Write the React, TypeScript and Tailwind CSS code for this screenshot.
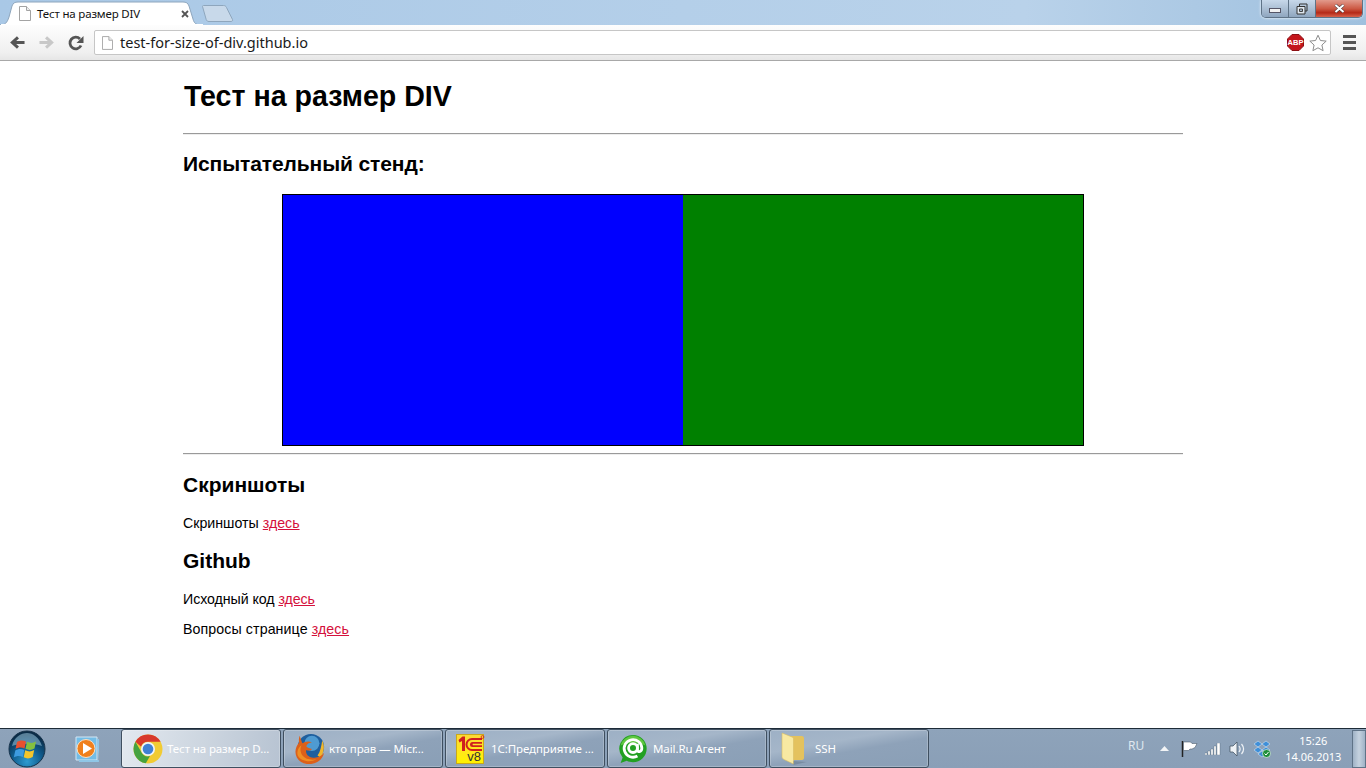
const arial = "font-['Liberation_Sans',Arial,sans-serif]";
const tahoma = "font-['Noto_Sans','DejaVu_Sans',sans-serif]";

function PageIcon({ className }: { className: string }) {
  return (
    <svg viewBox="0 0 12 15" className={className}>
      <path d="M.5.5h7l4 4v10H.5z" fill="#fff" stroke="#a3a3a3" />
      <path d="M7.5.5v4h4" fill="#eee" stroke="#a3a3a3" />
    </svg>
  );
}

function TabStrip() {
  return (
    <div className="h-[25px] flex shrink-0 bg-[linear-gradient(90deg,#a9c8e6,#b4cfe9_50%,#b9d2ea_75%,#9fc0de)]">
      <div className="relative w-[204px] h-[25px] shrink-0 flex items-center pl-[19px] pr-[15px] pt-[2px]">
        <svg viewBox="0 0 204 25" className="absolute inset-0 w-[204px] h-[25px]">
          <path d="M0 25c5 0 7-2 9-8l3-11c1-3 3-4 6-4h165c3 0 5 1 6 4l4 13c1 4 3 6 8 6z" fill="#fff" stroke="#8ea6bd" />
          <path d="M1 25h202" stroke="#fff" strokeWidth="2" />
        </svg>
        <PageIcon className="relative w-[12px] h-[15px] shrink-0" />
        <span className={`relative ml-[6px] text-[11.5px] tracking-[-0.17px] text-[#111] whitespace-nowrap ${tahoma}`}>Тест на размер DIV</span>
        <svg viewBox="0 0 8 8" className="relative ml-auto w-[8px] h-[8px]">
          <path d="M1 1l6 6M7 1L1 7" stroke="#555" strokeWidth="1.8" />
        </svg>
      </div>
      <svg viewBox="0 0 32 17" className="w-[32px] h-[17px] mt-[5px] -ml-[2px] shrink-0">
        <path d="M.5 1.5c0-.6.4-1 1-1h20c1.500 0 2.400.6 3 2l6 12c.4 1-.2 2-1.500 2H7c-1.500 0-2.300-.6-2.800-2z" fill="#c8d9ea" stroke="#8ea6bd" />
      </svg>
      <div className="ml-auto flex h-[18px] border border-t-0 border-[#5f7387] rounded-b-[5px] overflow-hidden mr-[3px] shadow-[0_0_3px_#fff]">
        <div className="w-[27px] flex items-center justify-center pt-[3px] bg-[linear-gradient(#c7d8ea,#a9bdd2_55%,#8fa6bf)] border-r border-[#5f7387]">
          <div className="w-[12px] h-[5px] mt-[1px] bg-[#f2f2f2] border border-[#556]" />
        </div>
        <div className="w-[27px] flex items-center justify-center bg-[linear-gradient(#c7d8ea,#a9bdd2_55%,#8fa6bf)] border-r border-[#5f7387]">
          <svg viewBox="0 0 12 12" className="w-[12px] h-[12px]">
            <path d="M3.500 3V1h7.500v7H9" fill="none" stroke="#333" />
            <path d="M1 3.500h8v7.500H1z" fill="#dfe7ef" stroke="#333" />
            <path d="M3.500 6h3v2.500h-3z" fill="#9fb2c6" stroke="#444" />
          </svg>
        </div>
        <div className="w-[46px] flex items-center justify-center bg-[linear-gradient(#e29a8c,#cc5a45_50%,#b52a18_75%,#d8634c)]">
          <svg viewBox="0 0 12 10" className="w-[11px] h-[9px]">
            <path d="M1.500 1l9 8M10.500 1l-9 8" stroke="#40363a" strokeWidth="3.400" />
            <path d="M1.500 1l9 8M10.500 1l-9 8" stroke="#fff" strokeWidth="2.200" />
          </svg>
        </div>
      </div>
    </div>
  );
}

function Toolbar() {
  return (
    <div className="h-[36px] shrink-0 flex items-center bg-[linear-gradient(#fdfdfd,#efefef_80%,#e6e6e6)] border-b border-[#a8a8a8]">
      <svg viewBox="0 0 18 16" className="ml-[9px] w-[17px] h-[15px]">
        <path d="M16.500 8H4M9.500 2.500L3.500 8l6 5.500" fill="none" stroke="#555" strokeWidth="3.200" />
      </svg>
      <svg viewBox="0 0 18 16" className="ml-[12px] w-[17px] h-[15px]">
        <path d="M1.500 8H14M8.500 2.500l6 5.500-6 5.500" fill="none" stroke="#c8c8c8" strokeWidth="3.200" />
      </svg>
      <svg viewBox="0 0 16 16" className="ml-[13px] w-[16px] h-[16px]">
        <path d="M13 10.500A5.800 5.800 0 1 1 12 4" fill="none" stroke="#555" strokeWidth="2.800" />
        <path d="M15.500 1v7h-7z" fill="#555" />
      </svg>
      <div className="ml-[10px] w-[1237px] h-[25px] flex items-center bg-white border border-[#c6c6c6] rounded-[2px]">
        <PageIcon className="ml-[7px] w-[11px] h-[14px]" />
        <span className={`ml-[7px] text-[14.5px] text-[#1a1a1a] ${tahoma}`}>test-for-size-of-div.github.io</span>
        <svg viewBox="0 0 17 17" className="ml-auto w-[17px] h-[17px]">
          <path d="M5 .5h7L16.500 5v7L12 16.500H5L.5 12V5z" fill="#c4161c" stroke="#8c1014" />
          <text x="8.500" y="11.200" textAnchor="middle" fontSize="7.500" fontWeight="700" fill="#fff" fontFamily="Liberation Sans">ABP</text>
        </svg>
        <svg viewBox="0 0 18 18" className="ml-[5px] mr-[3px] w-[18px] h-[18px]">
          <path d="M9 1.200l2.400 5.300 5.800.6-4.300 3.900 1.200 5.700L9 13.800l-5.100 2.900 1.200-5.700L.8 7.100l5.800-.6z" fill="#fff" stroke="#8d8d8d" />
        </svg>
      </div>
      <div className="ml-[12px] flex flex-col gap-[3px]">
        <div className="w-[13px] h-[3px] bg-[#555]" />
        <div className="w-[13px] h-[3px] bg-[#555]" />
        <div className="w-[13px] h-[3px] bg-[#555]" />
      </div>
    </div>
  );
}

function Page() {
  const heading = "text-[21px] leading-[23px] font-bold text-black";
  const para = "text-[14.2px] leading-[16px] text-black";
  const link = "text-[#d4103c] underline";
  return (
    <div className={`flex-1 bg-white ${arial}`}>
      <div className="w-[1000px] ml-[183px]">
        <h1 className="pt-[18px] pl-[1px] text-[28.6px] leading-[35px] font-bold text-black">Тест на размер DIV</h1>
        <hr className="mt-[19px] border-t border-b border-t-[#9a9a9a] border-b-[#eee]" />
        <h2 className={`mt-[17px] tracking-[-0.1px] ${heading}`}>Испытательный стенд:</h2>
        <div className="mt-[19px] mx-auto w-[802px] h-[252px] flex border border-black">
          <div className="w-[400px] bg-[#0000ff]" />
          <div className="w-[400px] bg-[#008000]" />
        </div>
        <hr className="mt-[7px] border-t border-b border-t-[#9a9a9a] border-b-[#eee]" />
        <h2 className={`mt-[18px] ${heading}`}>Скриншоты</h2>
        <p className={`mt-[19px] ${para}`}>Скриншоты <a className={link}>здесь</a></p>
        <h2 className={`mt-[18px] ${heading}`}>Github</h2>
        <p className={`mt-[19px] tracking-[-0.06px] ${para}`}>Исходный код <a className={link}>здесь</a></p>
        <p className={`mt-[14px] tracking-[0.1px] ${para}`}>Вопросы странице <a className={link}>здесь</a></p>
      </div>
    </div>
  );
}

function ChromeLogo() {
  return (
    <svg viewBox="0 0 30 30" className="w-[30px] h-[30px]">
      <circle cx="15" cy="15" r="14.500" fill="#f1cb33" />
      <path d="M2.400 7.800A14.500 14.500 0 0 1 27.600 7.800H15a7.200 7.200 0 0 0-6.900 5z" fill="#d8392c" />
      <path d="M2.400 7.800l6.300 11A7.200 7.200 0 0 0 17 22l-4.200 7.300A14.500 14.500 0 0 1 2.400 7.800z" fill="#45a23f" />
      <circle cx="15" cy="15" r="7" fill="#eef3fa" />
      <circle cx="15" cy="15" r="5.300" fill="#3f80d4" />
    </svg>
  );
}

function FirefoxLogo() {
  return (
    <svg viewBox="0 0 34 34" className="w-[34px] h-[34px]">
      <circle cx="18" cy="15" r="14" fill="#1f5f9e" />
      <circle cx="19" cy="11" r="8" fill="#4f9bd2" />
      <path d="M30 8c3 6 2 13-2 18l-3-2c3-4 4-10 5-16z" fill="#f2b62c" />
      <path d="M6 3c-1 3-1 5-.5 7C2 14 0 20 3 26c4 8 16 9 23 4 3-2 5-5 6-9-3 4-8 6-13 5-4-1-7-4-6-8 2 1 5 1 6-1-2-1-5-1-6-3 1-3 4-4 6-4-3-2-8-1-10 1-1-2-2-5-3-8z" fill="#dc601a" />
      <path d="M4 24c3 6 13 8 20 4-6 1-12 0-15-4-2-3-3-7-1-11-4 3-5 7-4 11z" fill="#ef8f24" />
    </svg>
  );
}

function OneCLogo() {
  return (
    <div className="relative mr-[4px] w-[30px] h-[30px] bg-[linear-gradient(#fdd835,#ffe81a_60%,#fff200)] border border-[#c9a818]">
      <svg viewBox="0 0 28 18" className="absolute left-0 top-0 w-[28px] h-[18px]">
        <path d="M1.500 5l4-3.500h2.500V16H5V6L2.500 7.500z" fill="#cf1f1f" />
        <path d="M25 3H15a6.500 6.500 0 0 0 0 13h10v-2H15a4.500 4.500 0 0 1 0-9h10z" fill="#cf1f1f" />
        <path d="M25 7h-9.500a2.500 2.500 0 0 0 0 5H25v-1.800h-9a.8.8 0 0 1 0-1.400h9z" fill="#cf1f1f" />
        <circle cx="25.500" cy="2" r="1.400" fill="none" stroke="#cf1f1f" strokeWidth=".8" />
      </svg>
      <span className="absolute right-[2px] bottom-[0px] text-[13px] leading-[13px] text-[#333] font-['Liberation_Sans',sans-serif]">v8</span>
    </div>
  );
}

function MailLogo() {
  return (
    <svg viewBox="0 0 34 34" className="mr-[2px] w-[34px] h-[34px]">
      <path d="M17 1a15.500 15.500 0 0 1 0 31c-2.500 0-5-.5-7-1.600L3 33l2.200-6.500A15.500 15.500 0 0 1 17 1z" fill="#22a022" />
      <path d="M17 2a14.500 14.500 0 0 1 14 11c-8-4-20-4-28 0A14.500 14.500 0 0 1 17 2z" fill="#7bd84e" opacity=".7" />
      <circle cx="17" cy="16" r="5" fill="none" stroke="#fff" strokeWidth="3.200" />
      <path d="M22 11v7c0 3 5 3 5-2a10 10 0 1 0-5 9" fill="none" stroke="#fff" strokeWidth="3.200" />
    </svg>
  );
}

function FolderLogo() {
  return (
    <svg viewBox="0 0 26 34" className="mr-[4px] w-[26px] h-[34px]">
      <path d="M7 4h14c1 0 2 1 2 2v20c0 1-1 2-2 2H9z" fill="#e4c25e" />
      <path d="M1 1l10 4c1 .5 1.500 1 1.500 2v25L3 27.500c-1-.5-2-1.500-2-3z" fill="#f8e9a2" stroke="#d9bd62" strokeWidth=".6" />
      <path d="M12.500 29l13 1-13 3z" fill="#5f7186" opacity=".45" />
    </svg>
  );
}

function TaskButton({ icon, label, active, gap }: { icon: React.ReactNode; label: string; active?: boolean; gap: string }) {
  return (
    <div
      className={`w-[160px] h-[39px] shrink-0 flex items-center pl-[10px] rounded-[3px] border shadow-[inset_0_0_0_1px_rgba(255,255,255,0.22)] ${
        active
          ? "border-[#3f4f60] bg-[linear-gradient(100deg,#e2e8ef,#cdd6e0_50%,#b7c3d2)]"
          : "border-[#3f4f60] bg-[linear-gradient(170deg,#9db0c5,#a5b6c9_35%,#8ea2b9_55%,#8a9fb6)]"
      }`}
    >
      <div className="w-[32px] flex justify-center shrink-0">{icon}</div>
      <span className={`${gap} text-[11.5px] tracking-[-0.1px] text-white whitespace-nowrap ${tahoma}`}>{label}</span>
    </div>
  );
}

function Taskbar() {
  return (
    <div className="h-[40px] shrink-0 flex items-center border-t border-[#1d2b38] bg-[linear-gradient(#8ea3ba,#8a9fb7)]">
      <svg viewBox="0 0 38 38" className="ml-[8px] w-[38px] h-[38px] shrink-0">
        <defs>
          <radialGradient id="orb" cx="50%" cy="85%" r="75%">
            <stop offset="0%" stopColor="#2f9bd0" />
            <stop offset="55%" stopColor="#0f5c8e" />
            <stop offset="100%" stopColor="#0a2c48" />
          </radialGradient>
        </defs>
        <circle cx="19" cy="19" r="18" fill="url(#orb)" stroke="#17324a" />
        <path d="M4 16c2-9 9-13 15-13s12 4 15 13c-8-3-22-3-30 0z" fill="#a8d4ea" opacity=".5" />
        <path d="M9 12c3-2 6-2 9-.5l-1.500 7c-3-1.500-6-1.500-9 .5z" fill="#e8502f" />
        <path d="M19 11.800c3 1.500 6 1.500 9-.3l-1.500 7c-3 1.800-6 1.800-9 .3z" fill="#84c040" />
        <path d="M7.300 20.500c3-2 6-2 9-.5l-1.500 7c-3-1.500-6-1.500-9 .5z" fill="#3d9be0" />
        <path d="M17.200 20.300c3 1.500 6 1.500 9-.3L24.700 27c-3 1.800-6 1.800-9 .3z" fill="#f3c52b" />
      </svg>
      <svg viewBox="0 0 30 30" className="ml-[27px] w-[30px] h-[30px] shrink-0">
        <path d="M3 3h21v23H3z" fill="#74bde6" stroke="#d3e6f4" />
        <path d="M24 5h2v21H6v2h20z" fill="#8fc6e6" />
        <circle cx="13" cy="14.500" r="9" fill="#f0801c" stroke="#fbe0c4" strokeWidth="1" />
        <path d="M10 9l9 5.500-9 5.500z" fill="#fff" />
      </svg>
      <div className="ml-[18px] flex gap-[2px]">
        <TaskButton active icon={<ChromeLogo />} label="Тест на размер D..." gap="ml-[3px]" />
        <TaskButton icon={<FirefoxLogo />} label="кто прав — Micr..." gap="ml-[3px]" />
        <TaskButton icon={<OneCLogo />} label="1С:Предприятие ..." gap="ml-[3px]" />
        <TaskButton icon={<MailLogo />} label="Mail.Ru Агент" gap="ml-[3px]" />
        <TaskButton icon={<FolderLogo />} label="SSH" gap="ml-[3px]" />
      </div>
      <span className={`ml-[199px] mb-[6px] text-[12px] text-[#dfe7ef] ${tahoma}`}>RU</span>
      <svg viewBox="0 0 9 5" className="ml-[16px] w-[9px] h-[5px]"><path d="M0 5l4.500-5L9 5z" fill="#f2f4f6" /></svg>
      <svg viewBox="0 0 17 16" className="ml-[12px] w-[17px] h-[16px]">
        <path d="M1.500 0v16" stroke="#222" strokeWidth="1.500" />
        <path d="M2.500 1h7l1.500 1.500h5l-2 4-3 1.500H9L7.500 9.500h-5z" fill="#fff" stroke="#3a4a5a" strokeWidth=".5" />
      </svg>
      <svg viewBox="0 0 16 12" className="ml-[7px] w-[16px] h-[12px]">
        <path d="M0 10h2v2H0zM3 8h2v4H3zM6 6h2v6H6zM9 3h2v9H9zM12 0h3v12h-3z" fill="#fff" stroke="#3a4a5a" strokeWidth=".3" />
      </svg>
      <svg viewBox="0 0 16 16" className="ml-[8px] w-[16px] h-[16px]">
        <path d="M1 5h3l4-4v14l-4-4H1z" fill="#eef2f6" stroke="#3a4a5a" strokeWidth=".7" />
        <path d="M10 5c1.500 2 1.500 4 0 6M12.500 3c2.500 3 2.500 7 0 10" fill="none" stroke="#eef2f6" strokeWidth="1.200" />
      </svg>
      <svg viewBox="0 0 18 18" className="ml-[8px] w-[18px] h-[18px]">
        <path d="M5 1l4 3-4 3-4-3zM13 1l4 3-4 3-4-3zM5 7l4 3-4 3-4-3zM13 7l4 3-4 3-4-3zM5 14l4-3 4 3-4 3z" fill="#3f8fd8" stroke="#e6f0f8" strokeWidth=".5" />
        <circle cx="13.500" cy="13.500" r="4" fill="#1e8f3a" stroke="#fff" strokeWidth=".6" />
        <path d="M11.500 13.500l1.500 1.500 2.500-3" fill="none" stroke="#fff" strokeWidth="1" />
      </svg>
      <div className={`ml-[13px] w-[58px] flex flex-col items-center text-[11px] leading-[16px] text-white ${tahoma}`}>
        <span>15:26</span>
        <span>14.06.2013</span>
      </div>
      <div className="ml-auto w-[14px] h-[38px] border border-[#5f7387] bg-[linear-gradient(90deg,#9fb2c6,#c5d2df,#9fb2c6)]" />
    </div>
  );
}

export default function App() {
  return (
    <div className="w-[1366px] h-[768px] flex flex-col overflow-hidden">
      <TabStrip />
      <Toolbar />
      <Page />
      <Taskbar />
    </div>
  );
}
